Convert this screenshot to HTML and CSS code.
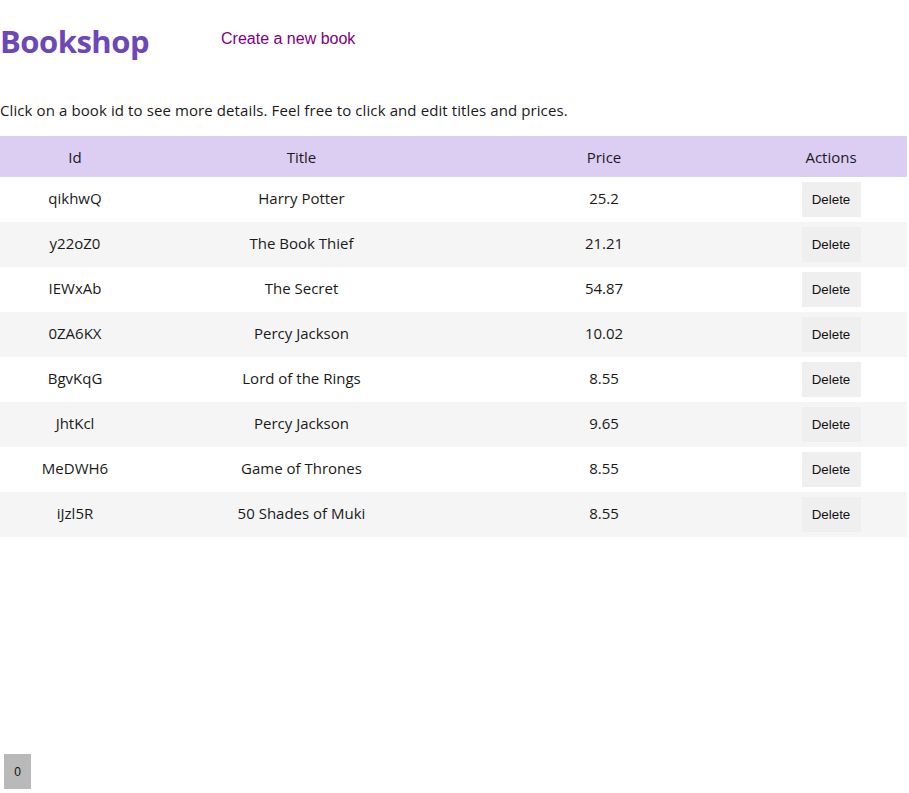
FILE: index.html
```html
<!DOCTYPE html>
<html>
<head>
<meta charset="utf-8">
<link rel="stylesheet" href="styles.css">
</head>
<body>
<header class="top">
  <h1 class="brand">Bookshop</h1>
  <a class="new-link" href="#">Create a new book</a>
</header>
<p class="hint">Click on a book id to see more details. Feel free to click and edit titles and prices.</p>
<table class="books">
  <thead>
    <tr><th class="c-id">Id</th><th class="c-title">Title</th><th class="c-price">Price</th><th class="c-act">Actions</th></tr>
  </thead>
  <tbody>
    <tr><td>qikhwQ</td><td>Harry Potter</td><td>25.2</td><td class="act"><button class="del">Delete</button></td></tr>
    <tr><td>y22oZ0</td><td>The Book Thief</td><td>21.21</td><td class="act"><button class="del">Delete</button></td></tr>
    <tr><td>IEWxAb</td><td>The Secret</td><td>54.87</td><td class="act"><button class="del">Delete</button></td></tr>
    <tr><td>0ZA6KX</td><td>Percy Jackson</td><td>10.02</td><td class="act"><button class="del">Delete</button></td></tr>
    <tr><td>BgvKqG</td><td>Lord of the Rings</td><td>8.55</td><td class="act"><button class="del">Delete</button></td></tr>
    <tr><td>JhtKcl</td><td>Percy Jackson</td><td>9.65</td><td class="act"><button class="del">Delete</button></td></tr>
    <tr><td>MeDWH6</td><td>Game of Thrones</td><td>8.55</td><td class="act"><button class="del">Delete</button></td></tr>
    <tr><td>iJzl5R</td><td>50 Shades of Muki</td><td>8.55</td><td class="act"><button class="del">Delete</button></td></tr>
  </tbody>
</table>
<div class="counter">0</div>
</body>
</html>
```
FILE: styles.css
```css
html, body {
  margin: 0;
  padding: 0;
  background: #fff;
}
body {
  font-family: "Open Sans", "Noto Sans", sans-serif;
  font-size: 15px;
  color: #1a1a1a;
  width: 907px;
  height: 793px;
  position: relative;
}
.top {
  display: flex;
  align-items: center;
  gap: 72px;
  height: 82px;
}
.brand {
  margin: 0;
  font-size: 31px;
  font-weight: 700;
  color: #6c47b9;
  letter-spacing: -0.5px;
  line-height: 1;
}
.new-link {
  font-family: "Liberation Sans", Arial, sans-serif;
  font-size: 16px;
  color: #800080;
  text-decoration: none;
  position: relative;
  top: -2px;
}
.hint {
  margin: 18px 0 16px;
  line-height: 20px;
  letter-spacing: 0.1px;
}
.books {
  width: 907px;
  border-collapse: collapse;
  table-layout: fixed;
}
.books th {
  background: #dccef3;
  font-weight: 400;
  height: 41px;
  padding: 0;
}
.books td {
  height: 42px;
  padding: 0 0 3px;
  text-align: center;
}
.books td.act {
  height: 45px;
  padding: 0;
}
.books tbody tr:nth-child(even) td {
  background: #f5f5f5;
}
.c-id { width: 150px; }
.c-title { width: 303px; }
.c-price { width: 302px; }
.c-act { width: 152px; }
.del {
  font-family: "Liberation Sans", Arial, sans-serif;
  font-size: 13.33px;
  color: #111;
  background: #efefef;
  border: none;
  padding: 0 10px;
  height: 35px;
  width: 59px;
}
.counter {
  position: absolute;
  left: 4px;
  top: 754px;
  width: 27px;
  height: 35px;
  background: #b9b9b9;
  font-family: "Liberation Sans", Arial, sans-serif;
  font-size: 12px;
  display: flex;
  align-items: center;
  justify-content: center;
  color: #111;
}
```
